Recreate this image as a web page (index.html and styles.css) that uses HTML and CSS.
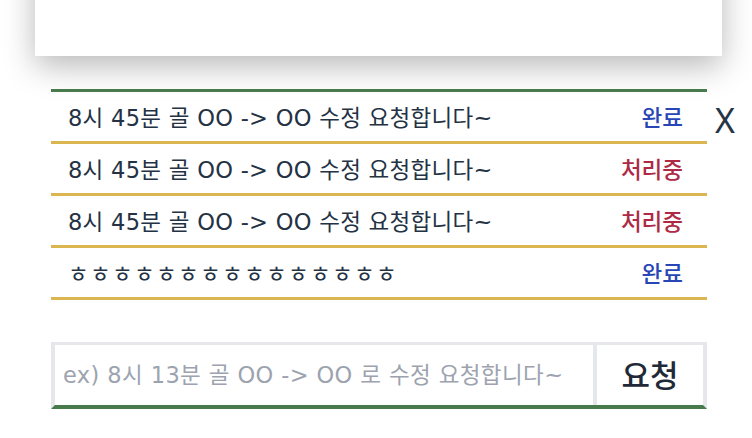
FILE: index.html
```html
<!DOCTYPE html>
<html lang="ko">
<head>
<meta charset="utf-8">
<link rel="stylesheet" href="styles.css">
</head>
<body>
<div class="card"></div>
<div class="board">
  <ul class="list">
    <li class="row"><span class="msg">8시 45분 골 OO -&gt; OO 수정 요청합니다~</span><span class="status done">완료</span></li>
    <li class="row"><span class="msg">8시 45분 골 OO -&gt; OO 수정 요청합니다~</span><span class="status doing">처리중</span></li>
    <li class="row"><span class="msg">8시 45분 골 OO -&gt; OO 수정 요청합니다~</span><span class="status doing">처리중</span></li>
    <li class="row"><span class="msg jamo">ㅎㅎㅎㅎㅎㅎㅎㅎㅎㅎㅎㅎㅎㅎㅎ</span><span class="status done">완료</span></li>
  </ul>
  <button class="close">X</button>
</div>
<form class="form">
  <input class="field" type="text" placeholder="ex) 8시 13분 골 OO -&gt; OO 로 수정 요청합니다~">
  <button class="submit" type="button">요청</button>
</form>
</body>
</html>
```

FILE: styles.css
```css
* { box-sizing: border-box; }
html, body { margin: 0; padding: 0; background: #fff; }
body {
  font-family: "DejaVu Sans", "Noto Sans CJK KR", sans-serif;
  color: #243244;
  overflow: hidden;
}
.card {
  margin: -144px 30px 0 35px;
  height: 200px;
  background: #fff;
  box-shadow: 0 10px 30px rgba(0,0,0,0.28);
}
.board {
  display: flex;
  align-items: flex-start;
  margin: 33px 0 0 51px;
}
.list {
  list-style: none;
  margin: 0;
  padding: 0;
  width: 656px;
  border-top: 3px solid #497a4c;
}
.row {
  display: flex;
  align-items: center;
  justify-content: space-between;
  height: 52px;
  padding: 0 24px 2px 17px;
  border-bottom: 3px solid #dbb54f;
  font-size: 22.5px;
  letter-spacing: 0.3px;
}
.msg { color: #243244; }
.jamo { letter-spacing: 1.3px; }
.status {
  font-family: "Noto Sans CJK KR", sans-serif;
  font-size: 22.5px;
  font-weight: 500;
  letter-spacing: 0;
}
.done { color: #2846b6; }
.doing { color: #ae2a44; }
.close {
  margin: 11px 0 0 8px;
  padding: 0;
  border: none;
  background: none;
  font-family: "Noto Sans", sans-serif;
  font-size: 34px;
  font-weight: 400;
  line-height: 40px;
  color: #263445;
}
.form {
  display: flex;
  margin: 42px 0 0 51px;
  width: 656px;
  height: 67px;
  border-top: 3px solid #e5e7eb;
  border-left: 4px solid #e5e7eb;
  border-right: 4px solid #e5e7eb;
  border-bottom: 4px solid #497a4c;
}
.field {
  flex: 1;
  min-width: 0;
  border: none;
  outline: none;
  padding: 0 0 0 8px;
  font-family: "DejaVu Sans", "Noto Sans CJK KR", sans-serif;
  font-size: 22.5px;
  letter-spacing: 0.4px;
  color: #243244;
  background: #fff;
}
.field::placeholder { color: #9ca3af; }
.submit {
  width: 110px;
  border: none;
  border-left: 4px solid #e5e7eb;
  background: #fff;
  font-family: "Noto Sans CJK KR", sans-serif;
  font-size: 31px;
  font-weight: 500;
  color: #1f2937;
  padding: 0 0 4px;
}
```
